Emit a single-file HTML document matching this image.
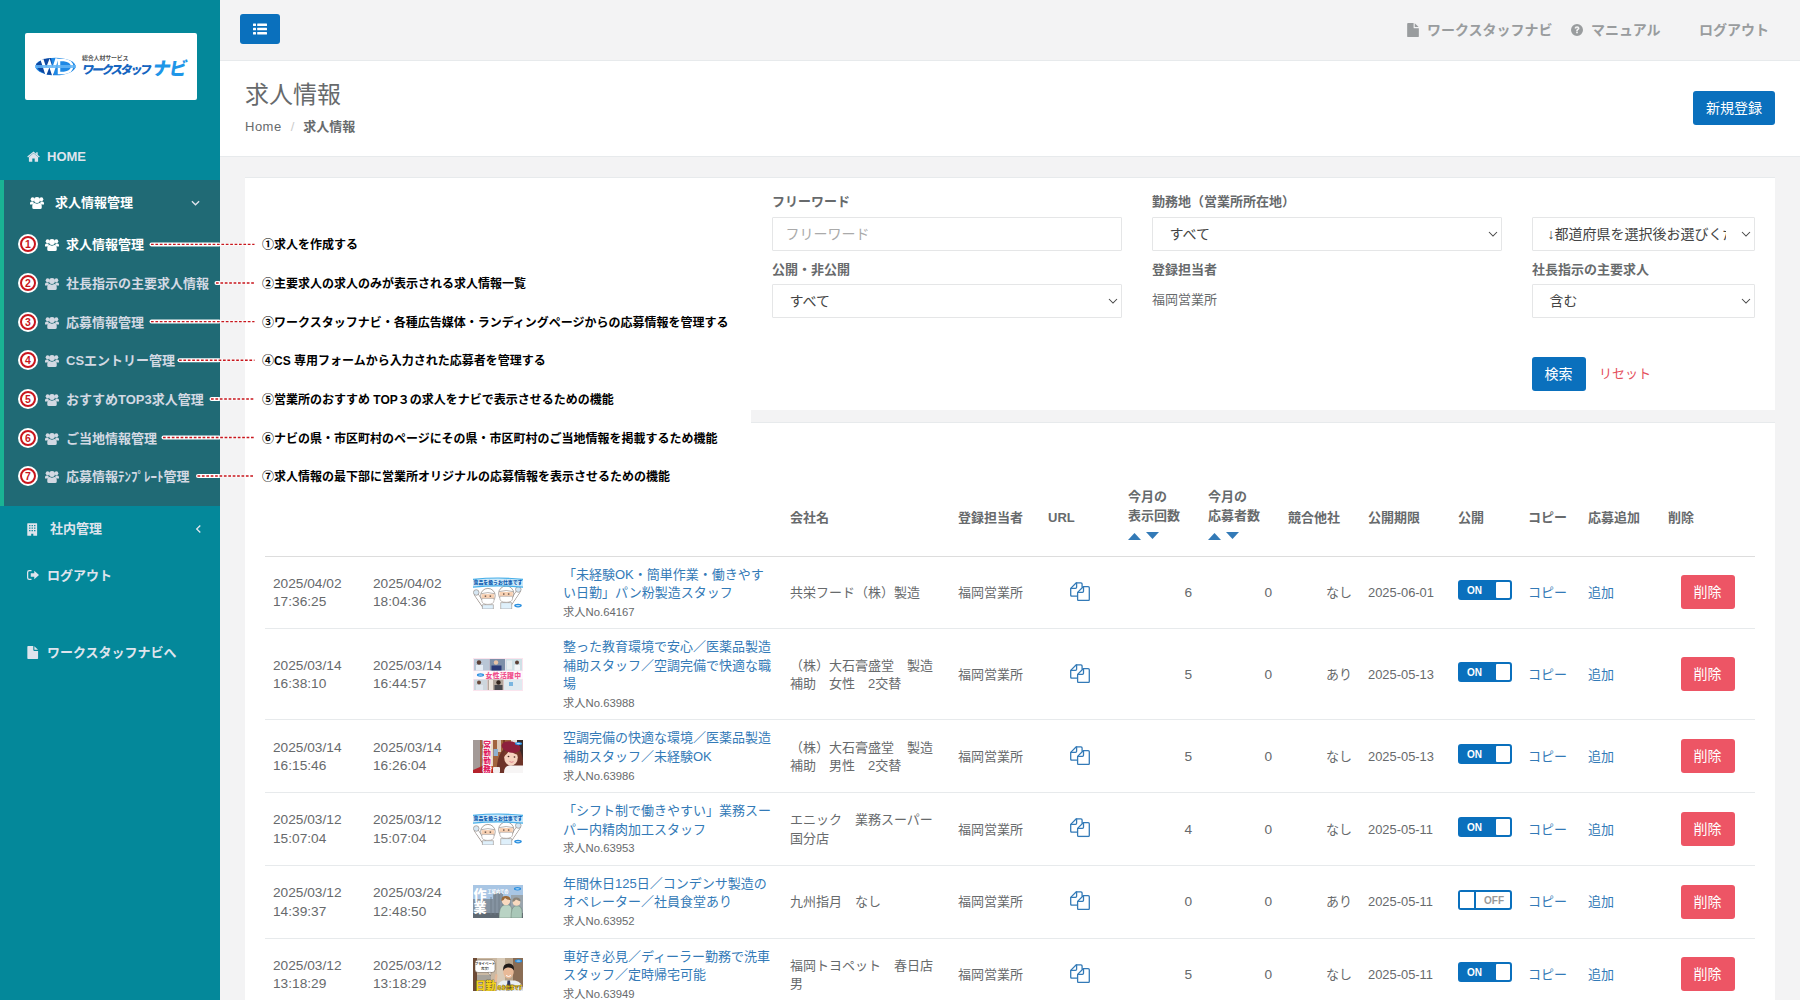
<!DOCTYPE html>
<html lang="ja">
<head>
<meta charset="utf-8">
<title>求人情報</title>
<style>
*{box-sizing:border-box;}
html,body{margin:0;padding:0;}
body{width:1800px;height:1000px;overflow:hidden;position:relative;background:#f3f3f4;color:#676a6c;
  font-family:"Liberation Sans","Noto Sans CJK JP",sans-serif;font-size:13px;line-height:18.57px;}
a{color:#337ab7;text-decoration:none;}
b,strong,th,label{font-weight:700;}
svg{display:block;}
.abs{position:absolute;}

/* ---------- sidebar ---------- */
#side{position:absolute;left:0;top:0;width:220px;height:1000px;background:#04889a;}
#logo{position:absolute;left:25px;top:33px;width:172px;height:67px;background:#fff;border-radius:2px;}
.nv{position:absolute;left:0;width:220px;height:46.5px;color:#dfe4ed;font-weight:700;font-size:13px;}
.nv .ic{position:absolute;top:50%;}
.nv .tx{position:absolute;top:50%;margin-top:.4px;transform:translateY(-50%);white-space:nowrap;line-height:18px;}
#act{position:absolute;left:0;top:179.5px;width:220px;height:326px;background:#206a75;border-left:4px solid #1ab394;}
.sub{position:absolute;left:0;width:220px;height:38px;color:#d3d9e3;font-weight:700;font-size:13px;}
.sub .num{position:absolute;left:18px;top:9px;width:20px;height:20px;border-radius:50%;background:#fff;}
.sub .ic{position:absolute;left:45px;top:13px;}
.sub .tx{position:absolute;left:66px;top:50%;margin-top:1px;transform:translateY(-50%);white-space:nowrap;line-height:18px;}

/* ---------- top ---------- */
#top{position:absolute;left:220px;top:0;width:1580px;height:61px;background:#f3f3f4;border-bottom:1px solid #e7eaec;}
#burger{position:absolute;left:20px;top:14px;width:40px;height:30px;background:#0a70bd;border-radius:3px;}
.tl{position:absolute;top:20px;height:20px;line-height:20px;font-size:14px;font-weight:700;color:#999c9e;white-space:nowrap;}
#head{position:absolute;left:220px;top:61px;width:1580px;height:96px;background:#fff;border-bottom:1px solid #e7eaec;}
#head h2{position:absolute;left:25px;top:21px;margin:0;font-size:24px;line-height:26px;font-weight:400;color:#676a6c;}
#crumb{position:absolute;left:25px;top:56px;line-height:19px;white-space:nowrap;}
#crumb .sl{color:#ccc;padding:0 9px 0 9px;}
.btn{position:absolute;color:#fff;background:#0a70bd;border-radius:3px;font-size:14px;text-align:center;white-space:nowrap;}

/* ---------- cards ---------- */
.card{position:absolute;left:245px;width:1530px;background:#fff;border-top:1px solid #e7eaec;}
label.fl{position:absolute;font-size:13px;line-height:18px;color:#676a6c;white-space:nowrap;}
.fc{position:absolute;height:34px;border:1px solid #e5e6e7;border-radius:1px;background:#fff;font-size:14px;line-height:32px;color:#444;white-space:nowrap;overflow:hidden;}
.fc .chev{position:absolute;right:2.500px;top:13px;}

/* ---------- table ---------- */
table{position:absolute;left:20px;top:55px;width:1490px;border-collapse:collapse;table-layout:fixed;}
th{text-align:left;vertical-align:middle;padding:8px;border-bottom:1px solid #ddd;white-space:nowrap;}
td{vertical-align:middle;padding:9px 8px 7px;border-top:1px solid #e7eaec;white-space:nowrap;}
td.r{text-align:right;}
.lt{font-size:13.7px;}
small{font-size:11.300px;line-height:16px;}
.del{display:inline-block;position:relative;top:-1px;margin-left:12.600px;width:54px;height:34px;line-height:34px;background:#ed5565;color:#fff;border-radius:3px;font-size:14px;text-align:center;}
.sw{position:relative;top:-3px;width:54px;height:20px;border:2px solid #0a70bd;border-radius:3px;background:#0a70bd;color:#fff;font-size:10px;font-weight:700;line-height:16px;}
.sw i{position:absolute;right:0;top:0;width:14.500px;height:16px;background:#fff;border-radius:1px;}
.sw span{position:absolute;left:7px;top:1px;font-style:normal;}
.sw.off{background:#fff;color:#999;}
.sw.off i{left:0;right:auto;border-right:2px solid #0a70bd;border-radius:0;width:16px;}
.sw.off span{left:24px;}
.th{width:50px;height:33px;overflow:hidden;position:relative;top:-1px;}

.sub.on{color:#fff;}
.sub .num b{position:absolute;left:2px;top:2px;width:16px;height:16px;border:2px solid #c8161d;border-radius:50%;line-height:12px;text-align:center;color:#c8161d;font-size:10.500px;font-weight:700;font-family:"Liberation Sans",sans-serif;}
#nvact{color:#fff;}

.so{display:block;height:20.500px;padding-top:7px;}
.so svg{display:inline-block;vertical-align:top;}
.t1{background:#dbeaf3;}.t2{background:#e8dfe6;}.t3{background:#a0655f;}.t4{background:#7e8e9c;}.t5{background:#8c7a4c;}

.an{position:absolute;left:17px;margin-top:1px;height:18px;line-height:18px;font-size:12px;font-weight:700;color:#000;white-space:nowrap;font-family:"Liberation Sans","Noto Sans CJK JP",sans-serif;}
.h1{position:relative;top:1.500px;}
.chev{stroke-width:1.050;}
.nv svg.ic{stroke-width:1.500;}
.ld{font-size:12.900px;}
</style>
</head>
<body>

<svg width="0" height="0" style="position:absolute">
<defs>
<symbol id="i-users" viewBox="0 0 28 26">
  <circle cx="5.300" cy="6.400" r="3.900"/><circle cx="22.700" cy="6.400" r="3.900"/><circle cx="14" cy="8" r="5.900"/>
  <path d="M0 17v-2.600q0-3.600 3.200-3.600h2.500q1 0 1.900.6Q6.500 13.700 7.600 16.200Q5.500 16.300 4.600 17z"/>
  <path d="M28 17v-2.600q0-3.600-3.200-3.600h-2.500q-1 0-1.900.6Q21.500 13.700 20.400 16.200Q22.500 16.300 23.400 17z"/>
  <path d="M4.500 23v-2.500q0-6.500 5.300-6.500Q11.600 15.600 14 15.600T18.200 14q5.300 0 5.300 6.500V23q0 3-3.300 3H7.800q-3.300 0-3.300-3z"/>
</symbol>
<symbol id="i-home" viewBox="0 0 26 22">
  <path d="M13 4.600 3.800 12.200V20.500q0 1 1 1H10.600V15H15.400V21.500H21.200q1 0 1-1V12.200z"/>
  <path d="M13 0.800 0.500 11.200 2 13 13 3.900 24 13 25.500 11.200 21.400 7.800V2.500H18.400V5.300z"/>
</symbol>
<symbol id="i-bldg" viewBox="0 0 20 24">
  <path fill-rule="evenodd" d="M1.500 0h17q1 0 1 1V23q0 1-1 1H12V20H8V24H1.500q-1 0-1-1V1q0-1 1-1zM4 3.500V6H6.500V3.500zM8.700 3.500V6H11.200V3.500zM13.500 3.500V6H16V3.500zM4 8.300V10.800H6.500V8.300zM8.700 8.300V10.800H11.200V8.300zM13.500 8.300V10.800H16V8.300zM4 13V15.500H6.500V13zM8.700 13V15.500H11.200V13zM13.500 13V15.500H16V13z"/>
</symbol>
<symbol id="i-out" viewBox="0 0 24 20">
  <path d="M9 2.500H5q-2.500 0-2.500 2.500V15q0 2.500 2.500 2.500H9V20H4.500Q0 20 0 15.500V4.500Q0 0 4.500 0H9z"/>
  <path d="M14.500 1.500 24 10 14.500 18.500V13.500H7.500V6.500H14.500z"/>
</symbol>
<symbol id="i-file" viewBox="0 0 20 24">
  <path d="M1.500 0H11V7.500q0 1.500 1.500 1.500H20V22.500q0 1.500-1.500 1.500H1.500Q0 24 0 22.500V1.500Q0 0 1.500 0z"/>
  <path d="M13 0.300 19.700 7H13z"/>
</symbol>
<symbol id="i-q" viewBox="0 0 24 24">
  <path fill-rule="evenodd" d="M12 0a12 12 0 1 0 0 24a12 12 0 1 0 0-24zM10.300 15.200H13.700V18.600H10.300zM7 8.600Q7.400 4.500 12.200 4.500Q16.800 4.700 17 8.400Q17 10.600 14.600 12Q13.700 12.600 13.700 13.800H10.300Q10.200 11.400 12.300 10.200Q13.500 9.500 13.500 8.600Q13.400 7.500 12.100 7.500Q10.600 7.500 10.300 9.300z"/>
</symbol>
<symbol id="i-chev" viewBox="0 0 10 6"><path d="M1 1l4 4 4-4" fill="none" stroke="currentColor"/></symbol>
<symbol id="i-copy" viewBox="0 0 20 19.2">
  <g fill="none" stroke="currentColor" stroke-width="1.300" stroke-linejoin="round" stroke-linecap="round">
  <path d="M7.300 14.200H1.800Q.7 14.200 .7 13.100V6.400L6.300 .8H11Q12.100 .8 12.100 1.900V5"/>
  <path d="M6.600 1V5.200Q6.600 6.300 5.500 6.300H1"/>
  <path d="M7.600 10.400 13.200 4.700H18.200Q19.300 4.700 19.300 5.800V17.400Q19.300 18.500 18.200 18.500H8.700Q7.600 18.500 7.600 17.400z"/>
  <path d="M13.500 5V9.200Q13.500 10.300 12.400 10.300H8"/>
  </g>
</symbol>
</defs>
</svg>

<!-- SIDEBAR -->
<div id="side">
  <div id="logo">
    <svg class="abs" style="left:10px;top:24px" width="41" height="19" viewBox="0 0 82 38">
      <ellipse cx="41" cy="19" rx="40" ry="17.500" fill="#1e88e5"/>
      <path d="M2 14 16 4 32 2 38 36 22 35 8 27z" fill="#0d47a1"/>
      <path d="M14 5 22 30 29 12 35 30 44 3" fill="none" stroke="#fff" stroke-width="6"/>
      <path d="M48 6H58Q74 8 74 19T58 32H48z" fill="none" stroke="#fff" stroke-width="5"/>
      <rect x="0" y="16" width="82" height="6" fill="#64b5f6" opacity=".85"/>
    </svg>
    <div class="abs" style="left:57px;top:22px;font-size:6px;line-height:7px;font-weight:700;color:#555;white-space:nowrap;letter-spacing:-.2px">総合人材サービス</div>
    <div class="abs" style="left:56px;top:30px;font-size:12px;line-height:14px;font-weight:900;color:#1565c0;white-space:nowrap;letter-spacing:-2.300px;transform:skewX(-10deg);transform-origin:0 100%">ワークスタッフ</div>
    <div class="abs" style="left:125.500px;top:26px;font-size:18px;line-height:20px;font-weight:900;color:#1e96e8;white-space:nowrap;letter-spacing:-1.500px;transform:skewX(-10deg);transform-origin:0 100%">ナビ</div>
  </div>
  <div id="act"></div>
  <div class="nv" style="top:133px;"><svg class="ic" style="left:27px;margin-top:-5.5px" width="13" height="11" fill="currentColor"><use href="#i-home"/></svg><span class="tx" style="left:47px">HOME</span></div>
  <div class="nv" id="nvact" style="top:179.5px;"><svg class="ic" style="left:30px;margin-top:-6.5px" width="14" height="13" fill="currentColor"><use href="#i-users"/></svg><span class="tx" style="left:55px">求人情報管理</span><svg class="ic" style="left:191px;margin-top:-3px;color:#dfe4ed" width="9" height="6"><use href="#i-chev"/></svg></div>
  <div class="sub on" style="top:225.3px;"><span class="num"><b>1</b></span><svg class="ic" width="14" height="13" fill="currentColor"><use href="#i-users"/></svg><span class="tx">求人情報管理</span></div>
  <div class="sub" style="top:264.0px;"><span class="num"><b>2</b></span><svg class="ic" width="14" height="13" fill="currentColor"><use href="#i-users"/></svg><span class="tx">社長指示の主要求人情報</span></div>
  <div class="sub" style="top:302.5px;"><span class="num"><b>3</b></span><svg class="ic" width="14" height="13" fill="currentColor"><use href="#i-users"/></svg><span class="tx">応募情報管理</span></div>
  <div class="sub" style="top:341.3px;"><span class="num"><b>4</b></span><svg class="ic" width="14" height="13" fill="currentColor"><use href="#i-users"/></svg><span class="tx">CSエントリー管理</span></div>
  <div class="sub" style="top:380.0px;"><span class="num"><b>5</b></span><svg class="ic" width="14" height="13" fill="currentColor"><use href="#i-users"/></svg><span class="tx">おすすめTOP3求人管理</span></div>
  <div class="sub" style="top:418.5px;"><span class="num"><b>6</b></span><svg class="ic" width="14" height="13" fill="currentColor"><use href="#i-users"/></svg><span class="tx">ご当地情報管理</span></div>
  <div class="sub" style="top:457.2px;"><span class="num"><b>7</b></span><svg class="ic" width="14" height="13" fill="currentColor"><use href="#i-users"/></svg><span class="tx">応募情報ﾃﾝﾌﾟﾚｰﾄ管理</span></div>
  <div class="nv" style="top:505.5px;"><svg class="ic" style="left:27px;margin-top:-6.200px" width="10.500" height="13" fill="currentColor"><use href="#i-bldg"/></svg><span class="tx" style="left:50px">社内管理</span><svg class="ic" style="left:194px;margin-top:-2.500px;transform:rotate(90deg);color:#dfe4ed" width="9" height="6"><use href="#i-chev"/></svg></div>
  <div class="nv" style="top:552px;"><svg class="ic" style="left:27px;margin-top:-5.0px" width="12" height="10" fill="currentColor"><use href="#i-out"/></svg><span class="tx" style="left:47px">ログアウト</span></div>
  <div class="nv" style="top:629px;"><svg class="ic" style="left:27px;margin-top:-6.200px" width="11.500" height="13" fill="currentColor"><use href="#i-file"/></svg><span class="tx" style="left:47px">ワークスタッフナビへ</span></div>
</div>

<!-- TOP BAR -->
<div id="top">
  <div id="burger"><svg style="position:absolute;left:13px;top:9px" width="14" height="12" viewBox="0 0 14 12" fill="#fff"><rect x="0" y="0.500" width="3" height="2.600" rx=".5"/><rect x="4.200" y="0.500" width="9.800" height="2.600" rx=".5"/><rect x="0" y="4.700" width="3" height="2.600" rx=".5"/><rect x="4.200" y="4.700" width="9.800" height="2.600" rx=".5"/><rect x="0" y="8.900" width="3" height="2.600" rx=".5"/><rect x="4.200" y="8.900" width="9.800" height="2.600" rx=".5"/></svg></div>
  <svg class="abs" style="left:1187px;top:23px" width="12" height="14" fill="#999c9e"><use href="#i-file"/></svg>
  <div class="tl" style="left:1207px;">ワークスタッフナビ</div>
  <svg class="abs" style="left:1351px;top:24px" width="12" height="12" fill="#999c9e"><use href="#i-q"/></svg>
  <div class="tl" style="left:1371px;">マニュアル</div>
  <div class="tl" style="left:1479px;">ログアウト</div>
</div>

<!-- HEADING -->
<div id="head">
  <h2>求人情報</h2>
  <div id="crumb"><span style="letter-spacing:.5px">Home</span><span class="sl">/</span><b>求人情報</b></div>
  <div class="btn" style="left:1473px;top:30px;width:82px;height:34px;line-height:34px;">新規登録</div>
</div>

<!-- CARD 1 : search -->
<div class="card" id="c1" style="top:177px;height:233px;">
  <label class="fl" style="left:527px;top:15px;">フリーワード</label>
  <div class="fc" style="left:526.5px;top:38.5px;width:350px;padding-left:13px;color:#aaa;">フリーワード</div>
  <label class="fl" style="left:527px;top:82.5px;">公開・非公開</label>
  <div class="fc" style="left:526.5px;top:106px;width:350px;padding-left:17px;">すべて<svg class="chev" width="10" height="6" style="color:#444"><use href="#i-chev"/></svg></div>

  <label class="fl" style="left:907px;top:15px;">勤務地（営業所所在地）</label>
  <div class="fc" style="left:906.5px;top:38.5px;width:350px;padding-left:17px;">すべて<svg class="chev" width="10" height="6" style="color:#444"><use href="#i-chev"/></svg></div>
  <label class="fl" style="left:907px;top:82.5px;">登録担当者</label>
  <div class="abs" style="left:907px;top:113px;line-height:18px;white-space:nowrap;">福岡営業所</div>

  <div class="fc" style="left:1286.5px;top:38.5px;width:223px;padding-left:15px;"><span style="display:block;width:178px;overflow:hidden;">↓都道府県を選択後お選びください</span><svg class="chev" width="10" height="6" style="color:#444"><use href="#i-chev"/></svg></div>
  <label class="fl" style="left:1287px;top:82.5px;">社長指示の主要求人</label>
  <div class="fc" style="left:1286.5px;top:106px;width:223px;padding-left:17px;">含む<svg class="chev" width="10" height="6" style="color:#444"><use href="#i-chev"/></svg></div>

  <div class="btn" style="left:1286.5px;top:179px;width:54px;height:34px;line-height:34px;">検索</div>
  <div class="abs" style="left:1354px;top:186px;font-size:13px;line-height:20px;color:#e4505c;white-space:nowrap;">リセット</div>
</div>

<!-- CARD 2 : list -->
<div class="card" id="c2" style="top:422px;height:600px;">
<table><colgroup><col style="width:100px"><col style="width:100px"><col style="width:90px"><col style="width:227px"><col style="width:168px"><col style="width:90px"><col style="width:80px"><col style="width:80px"><col style="width:80px"><col style="width:80px"><col style="width:90px"><col style="width:70px"><col style="width:60px"><col style="width:80px"><col style="width:95px"></colgroup>
<thead><tr style="height:78px">
<th></th><th></th><th></th><th></th><th><span class="h1">会社名</span></th><th><span class="h1">登録担当者</span></th><th><span class="h1">URL</span></th>
<th>今月の<br>表示回数<br><span class="so"><svg width="13" height="7" viewBox="0 0 13 7" fill="#337ab7" style="margin-top:.8px"><path d="M0 7 6.500 0 13 7z"/></svg><svg width="13" height="7" viewBox="0 0 13 7" fill="#337ab7" style="margin-left:5.300px"><path d="M0 0H13L6.500 7z"/></svg></span></th><th>今月の<br>応募者数<br><span class="so"><svg width="13" height="7" viewBox="0 0 13 7" fill="#337ab7" style="margin-top:.8px"><path d="M0 7 6.500 0 13 7z"/></svg><svg width="13" height="7" viewBox="0 0 13 7" fill="#337ab7" style="margin-left:5.300px"><path d="M0 0H13L6.500 7z"/></svg></span></th>
<th><span class="h1">競合他社</span></th><th><span class="h1">公開期限</span></th><th><span class="h1">公開</span></th><th><span class="h1">コピー</span></th><th><span class="h1">応募追加</span></th><th><span class="h1">削除</span></th>
</tr></thead>
<tbody><tr>
<td class="lt">2025/04/02<br>17:36:25</td><td class="lt">2025/04/02<br>18:04:36</td>
<td><div class="th"><svg width="50" height="33" viewBox="0 0 50 33"><rect width="50" height="33" fill="#fff"/>
<path d="M10.9 29.7L3.2 18.5" stroke="#8a7f78" stroke-width="4.200" stroke-linecap="round"/><path d="M10.9 29.7L3.2 18.5" stroke="#fff" stroke-width="3.200" stroke-linecap="round"/>
<circle cx="3.2" cy="16.5" r="2.800" fill="#d6e6f2" stroke="#8a7f78" stroke-width=".6"/>
<path d="M9.4 33V28.7h11V33z" fill="#dff0fb" stroke="#8a7f78" stroke-width=".5"/>
<circle cx="14.9" cy="19.7" r="7.3" fill="#fff" stroke="#8a7f78" stroke-width=".7"/>
<rect x="8.600000000000001" y="18.099999999999998" width="12.6" height="4.300" fill="#f9d2b4"/>
<path d="M8.200000000000001 17.7q6.7-2.200 13.4 0" fill="none" stroke="#8a7f78" stroke-width=".6"/>
<rect x="11.7" y="19.5" width="1.500" height="1.300" fill="#5a4a42"/><rect x="16.6" y="19.5" width="1.500" height="1.300" fill="#5a4a42"/>
<path d="M8.8 22.4h12.2v2q0 4-6.1 4t-6.1-4z" fill="#fff" stroke="#8a7f78" stroke-width=".5"/><path d="M37.2 27.6L45.3 15.5" stroke="#8a7f78" stroke-width="4.200" stroke-linecap="round"/><path d="M37.2 27.6L45.3 15.5" stroke="#fff" stroke-width="3.200" stroke-linecap="round"/>
<circle cx="45.3" cy="13.5" r="2.800" fill="#d6e6f2" stroke="#8a7f78" stroke-width=".6"/>
<path d="M27.700000000000003 33V26.6h11V33z" fill="#dff0fb" stroke="#8a7f78" stroke-width=".5"/>
<circle cx="33.2" cy="17.6" r="7.6" fill="#fff" stroke="#8a7f78" stroke-width=".7"/>
<rect x="26.6" y="16.0" width="13.2" height="4.300" fill="#f9d2b4"/>
<path d="M26.200000000000003 15.600000000000001q7.0-2.200 14.0 0" fill="none" stroke="#8a7f78" stroke-width=".6"/>
<rect x="30.000000000000004" y="17.400000000000002" width="1.500" height="1.300" fill="#5a4a42"/><rect x="34.900000000000006" y="17.400000000000002" width="1.500" height="1.300" fill="#5a4a42"/>
<path d="M26.8 20.3h12.799999999999999v2q0 4-6.3999999999999995 4t-6.3999999999999995-4z" fill="#fff" stroke="#8a7f78" stroke-width=".5"/>
<path d="M0 2.800Q25 .2 50 2.800V11.800Q25 9.200 0 11.800z" fill="#45aee8"/><path d="M0 3.900Q25 1.300 50 3.900V10.500Q25 7.900 0 10.500z" fill="#cbe8f9"/>
<text x="25" y="8.300" text-anchor="middle" font-size="4.900" font-weight="900" fill="#0f5cb0" font-family="Liberation Sans, Noto Sans CJK JP, sans-serif">食品を扱うお仕事です</text>
<ellipse cx="45" cy="29.6" rx="3.800" ry="1.800" fill="#2a8fe0"/><ellipse cx="45" cy="29.6" rx="2.300" ry=".6" fill="#bfe2fa"/></svg></div></td>
<td><a>「未経験OK・簡単作業・働きやす<br>い日勤」パン粉製造スタッフ</a><br><small>求人No.64167</small></td>
<td>共栄フード（株）製造</td><td>福岡営業所</td>
<td><svg style="margin-left:22px;margin-top:-4px;color:#337ab7" width="20" height="19.200"><use href="#i-copy"/></svg></td>
<td class="r lt">6</td><td class="r lt">0</td><td class="r">なし</td><td class="ld">2025-06-01</td>
<td><div class="sw"><span>ON</span><i></i></div></td><td><a>コピー</a></td><td><a>追加</a></td><td><span class="del">削除</span></td>
</tr><tr>
<td class="lt">2025/03/14<br>16:38:10</td><td class="lt">2025/03/14<br>16:44:57</td>
<td><div class="th"><svg width="50" height="33" viewBox="0 0 50 33"><rect width="50" height="33" fill="#fbe4ee"/>
<rect x="1" y="1" width="15" height="11.500" fill="#b9c6d6"/><rect x="16.500" y="1" width="15.500" height="11.500" fill="#7d8fa8"/><rect x="32.500" y="1" width="16.500" height="11.500" fill="#cfe0e6"/>
<circle cx="6" cy="4.500" r="2.200" fill="#5b4036"/><rect x="3" y="7" width="7" height="5.500" fill="#e6edf5"/>
<circle cx="23" cy="4.500" r="2.200" fill="#e9c3a6"/><rect x="18.500" y="7.500" width="10" height="5" fill="#2b3a78"/>
<circle cx="44" cy="4.500" r="2" fill="#5b4036"/><rect x="41.500" y="7" width="5.500" height="5.500" fill="#f4f6f8"/><rect x="34" y="2.500" width="5" height="9" fill="#e9eef0"/>
<rect x="0" y="13" width="50" height="8" fill="#fff" opacity=".75"/>
<ellipse cx="7.5" cy="17" rx="3.600" ry="1.700" fill="#2a8fe0"/><ellipse cx="7.5" cy="17" rx="2.200" ry=".6" fill="#bfe2fa"/>
<text x="30.500" y="19.800" text-anchor="middle" font-size="6.800" font-weight="900" fill="#f0528e" letter-spacing=".4" font-family="Liberation Sans, Noto Sans CJK JP, sans-serif">女性活躍中</text>
<rect x="1" y="21.500" width="13" height="10.500" fill="#cdd6dd"/><rect x="14.500" y="21.500" width="16" height="10.500" fill="#b3a79d"/><rect x="31" y="21.500" width="18" height="10.500" fill="#dfeaf0"/>
<circle cx="6" cy="24.500" r="2" fill="#6b4a3c"/><rect x="3" y="27" width="7" height="5" fill="#dfe6ee"/>
<circle cx="25.500" cy="24.500" r="2.200" fill="#33261f"/><rect x="21.500" y="27" width="8" height="5" fill="#4a4a4f"/><rect x="16" y="22" width="4" height="10" fill="#efe7df"/>
<rect x="36" y="24" width="4" height="4" fill="#7ab6e0"/></svg></div></td>
<td><a>整った教育環境で安心／医薬品製造<br>補助スタッフ／空調完備で快適な職<br>場</a><br><small>求人No.63988</small></td>
<td>（株）大石膏盛堂　製造<br>補助　女性　2交替</td><td>福岡営業所</td>
<td><svg style="margin-left:22px;margin-top:-4px;color:#337ab7" width="20" height="19.200"><use href="#i-copy"/></svg></td>
<td class="r lt">5</td><td class="r lt">0</td><td class="r">あり</td><td class="ld">2025-05-13</td>
<td><div class="sw"><span>ON</span><i></i></div></td><td><a>コピー</a></td><td><a>追加</a></td><td><span class="del">削除</span></td>
</tr><tr>
<td class="lt">2025/03/14<br>16:15:46</td><td class="lt">2025/03/14<br>16:26:04</td>
<td><div class="th"><svg width="50" height="33" viewBox="0 0 50 33"><rect width="50" height="33" fill="#a2643f"/>
<rect x="0" y="0" width="7" height="33" fill="#a39a97"/>
<rect x="17" y="0" width="3" height="26" fill="#e9d9c8"/><rect x="24" y="0" width="4" height="12" fill="#dcc9b8"/><rect x="30" y="0" width="2" height="20" fill="#7a3f23"/><rect x="20.500" y="9" width="4.500" height="7" fill="#8fb0d0"/><rect x="44" y="0" width="6" height="20" fill="#3a2a28"/><rect x="38" y="0" width="6" height="4" fill="#e8e2dc"/>
<path d="M24 33Q23 16 31 9Q39 3 46 9Q51 16 50 30V33z" fill="#6e3429"/>
<ellipse cx="38" cy="17.500" rx="6.800" ry="8.300" fill="#f6d3c0"/>
<path d="M30.500 14Q33 7 41 7.500Q46 9 45.500 15Q40 14 37 10Q34 14 30.500 17z" fill="#7a3a2b"/>
<ellipse cx="38" cy="7" rx="9.500" ry="5.500" fill="#8d1f3c" transform="rotate(12 38 7)"/>
<path d="M31 33Q31 26 36 25.500H50V33z" fill="#f7f5f5"/>
<rect x="20" y="27" width="7" height="6" rx="1" fill="#f3eeee"/><path d="M0 33V30L14 24 20 27V33z" fill="#b5222c"/>
<ellipse cx="35.500" cy="16.500" rx=".9" ry=".7" fill="#4a2a22"/><ellipse cx="41.500" cy="17" rx=".9" ry=".7" fill="#4a2a22"/><path d="M36.500 21.500q2 1.500 4 .2" stroke="#d4607a" stroke-width=".7" fill="none"/>
<g font-size="7.600" font-weight="900" fill="#e0205f" stroke="#fff" stroke-width="1.600" paint-order="stroke" text-anchor="middle" font-family="Liberation Sans, Noto Sans CJK JP, sans-serif"><text x="14" y="7.500">常</text><text x="14" y="15.500">勤</text><text x="14" y="23.500">勤</text><text x="14" y="31.500">務</text></g>
<ellipse cx="45.5" cy="3.6" rx="3.600" ry="1.700" fill="#2a8fe0"/><ellipse cx="45.5" cy="3.6" rx="2.200" ry=".6" fill="#bfe2fa"/></svg></div></td>
<td><a>空調完備の快適な環境／医薬品製造<br>補助スタッフ／未経験OK</a><br><small>求人No.63986</small></td>
<td>（株）大石膏盛堂　製造<br>補助　男性　2交替</td><td>福岡営業所</td>
<td><svg style="margin-left:22px;margin-top:-4px;color:#337ab7" width="20" height="19.200"><use href="#i-copy"/></svg></td>
<td class="r lt">5</td><td class="r lt">0</td><td class="r">なし</td><td class="ld">2025-05-13</td>
<td><div class="sw"><span>ON</span><i></i></div></td><td><a>コピー</a></td><td><a>追加</a></td><td><span class="del">削除</span></td>
</tr><tr>
<td class="lt">2025/03/12<br>15:07:04</td><td class="lt">2025/03/12<br>15:07:04</td>
<td><div class="th"><svg width="50" height="33" viewBox="0 0 50 33"><rect width="50" height="33" fill="#fff"/>
<path d="M10.9 29.7L3.2 18.5" stroke="#8a7f78" stroke-width="4.200" stroke-linecap="round"/><path d="M10.9 29.7L3.2 18.5" stroke="#fff" stroke-width="3.200" stroke-linecap="round"/>
<circle cx="3.2" cy="16.5" r="2.800" fill="#d6e6f2" stroke="#8a7f78" stroke-width=".6"/>
<path d="M9.4 33V28.7h11V33z" fill="#dff0fb" stroke="#8a7f78" stroke-width=".5"/>
<circle cx="14.9" cy="19.7" r="7.3" fill="#fff" stroke="#8a7f78" stroke-width=".7"/>
<rect x="8.600000000000001" y="18.099999999999998" width="12.6" height="4.300" fill="#f9d2b4"/>
<path d="M8.200000000000001 17.7q6.7-2.200 13.4 0" fill="none" stroke="#8a7f78" stroke-width=".6"/>
<rect x="11.7" y="19.5" width="1.500" height="1.300" fill="#5a4a42"/><rect x="16.6" y="19.5" width="1.500" height="1.300" fill="#5a4a42"/>
<path d="M8.8 22.4h12.2v2q0 4-6.1 4t-6.1-4z" fill="#fff" stroke="#8a7f78" stroke-width=".5"/><path d="M37.2 27.6L45.3 15.5" stroke="#8a7f78" stroke-width="4.200" stroke-linecap="round"/><path d="M37.2 27.6L45.3 15.5" stroke="#fff" stroke-width="3.200" stroke-linecap="round"/>
<circle cx="45.3" cy="13.5" r="2.800" fill="#d6e6f2" stroke="#8a7f78" stroke-width=".6"/>
<path d="M27.700000000000003 33V26.6h11V33z" fill="#dff0fb" stroke="#8a7f78" stroke-width=".5"/>
<circle cx="33.2" cy="17.6" r="7.6" fill="#fff" stroke="#8a7f78" stroke-width=".7"/>
<rect x="26.6" y="16.0" width="13.2" height="4.300" fill="#f9d2b4"/>
<path d="M26.200000000000003 15.600000000000001q7.0-2.200 14.0 0" fill="none" stroke="#8a7f78" stroke-width=".6"/>
<rect x="30.000000000000004" y="17.400000000000002" width="1.500" height="1.300" fill="#5a4a42"/><rect x="34.900000000000006" y="17.400000000000002" width="1.500" height="1.300" fill="#5a4a42"/>
<path d="M26.8 20.3h12.799999999999999v2q0 4-6.3999999999999995 4t-6.3999999999999995-4z" fill="#fff" stroke="#8a7f78" stroke-width=".5"/>
<path d="M0 2.800Q25 .2 50 2.800V11.800Q25 9.200 0 11.800z" fill="#45aee8"/><path d="M0 3.900Q25 1.300 50 3.900V10.500Q25 7.900 0 10.500z" fill="#cbe8f9"/>
<text x="25" y="8.300" text-anchor="middle" font-size="4.900" font-weight="900" fill="#0f5cb0" font-family="Liberation Sans, Noto Sans CJK JP, sans-serif">食品を扱うお仕事です</text>
<ellipse cx="45" cy="29.6" rx="3.800" ry="1.800" fill="#2a8fe0"/><ellipse cx="45" cy="29.6" rx="2.300" ry=".6" fill="#bfe2fa"/></svg></div></td>
<td><a>「シフト制で働きやすい」業務スー<br>パー内精肉加工スタッフ</a><br><small>求人No.63953</small></td>
<td>エニック　業務スーパー<br>国分店</td><td>福岡営業所</td>
<td><svg style="margin-left:22px;margin-top:-4px;color:#337ab7" width="20" height="19.200"><use href="#i-copy"/></svg></td>
<td class="r lt">4</td><td class="r lt">0</td><td class="r">なし</td><td class="ld">2025-05-11</td>
<td><div class="sw"><span>ON</span><i></i></div></td><td><a>コピー</a></td><td><a>追加</a></td><td><span class="del">削除</span></td>
</tr><tr>
<td class="lt">2025/03/12<br>14:39:37</td><td class="lt">2025/03/24<br>12:48:50</td>
<td><div class="th"><svg width="50" height="33" viewBox="0 0 50 33"><rect width="50" height="33" fill="#a9c6e4"/>
<path d="M0 14H20V8H30V14H50V33H0z" fill="#8593a1"/><rect x="0" y="28" width="50" height="5" fill="#5f6972"/>
<g stroke="#6d7a86" stroke-width=".8"><path d="M22 6V30M26 6V30M18 12V30M30 12V30"/></g>
<rect x="38" y="10" width="12" height="18" fill="#9aa5ad"/>
<path d="M26 33Q26 21 31 20H36Q40 21 39 33z" fill="#b9d3c4" stroke="#5a6a63" stroke-width=".4"/><path d="M38 33Q38 22 42 21H46Q50 22 49 33z" fill="#a9c7b8" stroke="#5a6a63" stroke-width=".4"/>
<circle cx="33" cy="16" r="4.200" fill="#f8d9bf"/><path d="M28.500 16Q28 10.500 33.500 11Q38 11.500 37.500 15Q34 15 32 13Q31 15.500 28.500 16z" fill="#9b6a3a"/>
<circle cx="43.500" cy="17" r="3.800" fill="#f8d9bf"/><path d="M39.500 17Q39 12 44 12.500Q48 13 47.500 16.500Q45 15.500 43 14.500Q41.500 16.500 39.500 17z" fill="#8a8378"/>
<g font-weight="900" fill="#fff" font-family="Liberation Sans, Noto Sans CJK JP, sans-serif"><text x="0.500" y="13.500" font-size="13">作</text><text x="0.500" y="26.500" font-size="13">業</text><text x="14.500" y="8" font-size="4.200">工場内での</text></g>
<ellipse cx="44.5" cy="3.8" rx="3.600" ry="1.700" fill="#2a8fe0"/><ellipse cx="44.5" cy="3.8" rx="2.200" ry=".6" fill="#bfe2fa"/></svg></div></td>
<td><a>年間休日125日／コンデンサ製造の<br>オペレーター／社員食堂あり</a><br><small>求人No.63952</small></td>
<td>九州指月　なし</td><td>福岡営業所</td>
<td><svg style="margin-left:22px;margin-top:-4px;color:#337ab7" width="20" height="19.200"><use href="#i-copy"/></svg></td>
<td class="r lt">0</td><td class="r lt">0</td><td class="r">あり</td><td class="ld">2025-05-11</td>
<td><div class="sw off"><i></i><span>OFF</span></div></td><td><a>コピー</a></td><td><a>追加</a></td><td><span class="del">削除</span></td>
</tr><tr>
<td class="lt">2025/03/12<br>13:18:29</td><td class="lt">2025/03/12<br>13:18:29</td>
<td><div class="th"><svg width="50" height="33" viewBox="0 0 50 33"><rect width="50" height="33" fill="#b9a58c"/>
<rect x="0" y="0" width="4" height="33" fill="#6d4a35"/><rect x="4" y="0" width="20" height="33" fill="#cbb9a3"/><rect x="24" y="0" width="8" height="33" fill="#d9cbb8"/><rect x="40" y="0" width="10" height="33" fill="#8a6d55"/><rect x="4" y="17" width="14" height="8" fill="#a8a39b"/>
<path d="M24 33Q24 24 30 22.500H42Q50 24 50 33z" fill="#e9eef2"/><path d="M34.500 22.500h2.500l.8 8-2 2-2-2z" fill="#2b3560"/>
<ellipse cx="35.500" cy="14" rx="5.200" ry="6.500" fill="#e8b997"/><path d="M30 13Q29.500 5.500 36 5.500Q41.500 6 41 12.500Q39 9 34.500 9.500Q31 10 30 13z" fill="#1f1a18"/>
<path d="M33 17.500q2.500 2 5 0" stroke="#fff" stroke-width="1" fill="none"/>
<path d="M21 25l1.500-9 2 .4-.8 8.600z" fill="#e8b997"/>
<rect x="2" y="2" width="20" height="12.500" rx="3" fill="#fff" stroke="#5a4a3a" stroke-width=".5"/><path d="M15 14.300l2.500 3.500.5-3.500z" fill="#fff" stroke="#5a4a3a" stroke-width=".4"/>
<g font-weight="700" fill="#333" text-anchor="middle" font-size="3.400" font-family="Liberation Sans, Noto Sans CJK JP, sans-serif"><text x="12" y="7.200">プライベート</text><text x="12" y="11.800">充実!</text></g>
<g font-weight="900" fill="#f2d21a" stroke="#4a3a10" stroke-width=".5" paint-order="stroke" font-family="Liberation Sans, Noto Sans CJK JP, sans-serif"><text x="2" y="31.500" font-size="11" letter-spacing="-.5">日勤</text><text x="24.500" y="30.800" font-size="4.200">のお仕事です</text></g>
<ellipse cx="45.5" cy="3" rx="3.600" ry="1.700" fill="#2a8fe0"/><ellipse cx="45.5" cy="3" rx="2.200" ry=".6" fill="#bfe2fa"/></svg></div></td>
<td><a>車好き必見／ディーラー勤務で洗車<br>スタッフ／定時帰宅可能</a><br><small>求人No.63949</small></td>
<td>福岡トヨペット　春日店<br>男</td><td>福岡営業所</td>
<td><svg style="margin-left:22px;margin-top:-4px;color:#337ab7" width="20" height="19.200"><use href="#i-copy"/></svg></td>
<td class="r lt">5</td><td class="r lt">0</td><td class="r">なし</td><td class="ld">2025-05-11</td>
<td><div class="sw"><span>ON</span><i></i></div></td><td><a>コピー</a></td><td><a>追加</a></td><td><span class="del">削除</span></td>
</tr></tbody>
</table>
</div>

<!-- ANNOTATION OVERLAY -->
<div id="ov" class="abs" style="left:245px;top:179px;width:506px;height:320px;background:#fff;">
  <div class="an" id="an0" style="top:56.4px;">①求人を作成する</div>
  <div class="an" id="an1" style="top:95.0px;">②主要求人の求人のみが表示される求人情報一覧</div>
  <div class="an" id="an2" style="top:133.6px;">③ワークスタッフナビ・各種広告媒体・ランディングページからの応募情報を管理する</div>
  <div class="an" id="an3" style="top:172.2px;">④CS 専用フォームから入力された応募者を管理する</div>
  <div class="an" id="an4" style="top:211.0px;">⑤営業所のおすすめ TOP３の求人をナビで表示させるための機能</div>
  <div class="an" id="an5" style="top:249.5px;">⑥ナビの県・市区町村のページにその県・市区町村のご当地情報を掲載するため機能</div>
  <div class="an" id="an6" style="top:288.0px;">⑦求人情報の最下部に営業所オリジナルの応募情報を表示させるための機能</div>
</div>
<svg class="abs" style="left:0;top:0;pointer-events:none" width="300" height="520" viewBox="0 0 300 520">
  <path d="M151.5 244.4H219" stroke="#fff" stroke-width="4" stroke-linecap="round"/>
  <path d="M220 244.4H254" stroke="#fff" stroke-width="3" opacity=".6"/>
  <path d="M151 244.4H254.5" stroke="#c8161d" stroke-width="1.400" stroke-dasharray="2.700 1.700"/>
  <path d="M216.5 283H219" stroke="#fff" stroke-width="4" stroke-linecap="round"/>
  <path d="M220 283H254" stroke="#fff" stroke-width="3" opacity=".6"/>
  <path d="M216 283H254.5" stroke="#c8161d" stroke-width="1.400" stroke-dasharray="2.700 1.700"/>
  <path d="M151.5 321.6H219" stroke="#fff" stroke-width="4" stroke-linecap="round"/>
  <path d="M220 321.6H254" stroke="#fff" stroke-width="3" opacity=".6"/>
  <path d="M151 321.6H254.5" stroke="#c8161d" stroke-width="1.400" stroke-dasharray="2.700 1.700"/>
  <path d="M179.5 360.2H219" stroke="#fff" stroke-width="4" stroke-linecap="round"/>
  <path d="M220 360.2H254" stroke="#fff" stroke-width="3" opacity=".6"/>
  <path d="M179 360.2H254.5" stroke="#c8161d" stroke-width="1.400" stroke-dasharray="2.700 1.700"/>
  <path d="M211.5 399H219" stroke="#fff" stroke-width="4" stroke-linecap="round"/>
  <path d="M220 399H254" stroke="#fff" stroke-width="3" opacity=".6"/>
  <path d="M211 399H254.5" stroke="#c8161d" stroke-width="1.400" stroke-dasharray="2.700 1.700"/>
  <path d="M163.5 437.5H219" stroke="#fff" stroke-width="4" stroke-linecap="round"/>
  <path d="M220 437.5H254" stroke="#fff" stroke-width="3" opacity=".6"/>
  <path d="M163 437.5H254.5" stroke="#c8161d" stroke-width="1.400" stroke-dasharray="2.700 1.700"/>
  <path d="M198.0 476H219" stroke="#fff" stroke-width="4" stroke-linecap="round"/>
  <path d="M220 476H254" stroke="#fff" stroke-width="3" opacity=".6"/>
  <path d="M197.5 476H254.5" stroke="#c8161d" stroke-width="1.400" stroke-dasharray="2.700 1.700"/>
</svg>

</body>
</html>
